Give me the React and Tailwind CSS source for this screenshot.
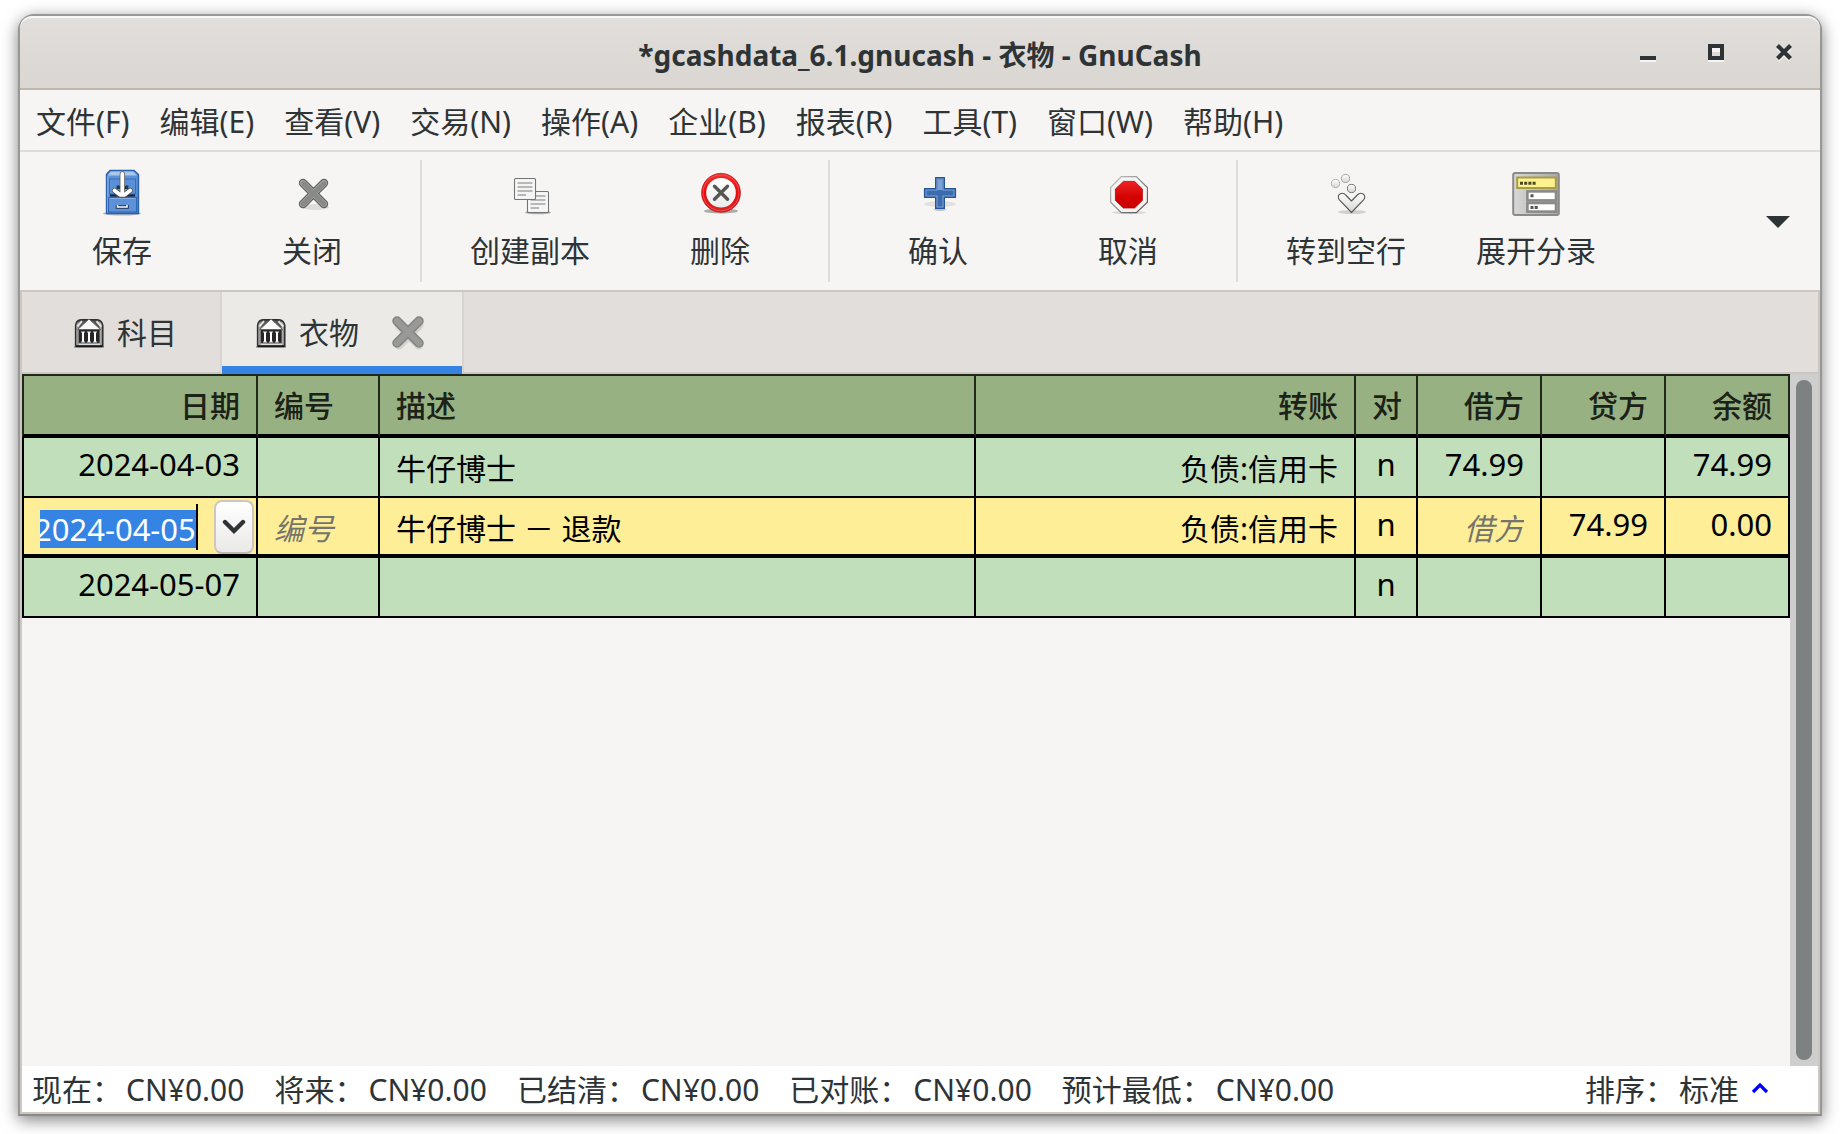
import { useEffect, useRef } from "react";

const SANS = "font-['Noto_Sans','Noto_Sans_CJK_SC',sans-serif]";

const menus = ["文件(F)", "编辑(E)", "查看(V)", "交易(N)", "操作(A)", "企业(B)", "报表(R)", "工具(T)", "窗口(W)", "帮助(H)"];

function SaveIcon() {
  return (
    <svg viewBox="0 0 48 48" className="size-12">
      <defs>
        <linearGradient id="cab" x1="0" y1="0" x2="0" y2="1">
          <stop offset="0" stopColor="#5f93d8" />
          <stop offset="1" stopColor="#4f86d0" />
        </linearGradient>
      </defs>
      <ellipse cx="24" cy="45.5" rx="19" ry="2" fill="#000" opacity="0.25" />
      <path d="M8.5 6.5 L12 2.5 H36 L40.5 6.5 V45.5 H8.5Z" fill="url(#cab)" stroke="#2a62ad" strokeWidth="1.4" />
      <path d="M9.8 7.5 L12.7 3.6 H35.4 L39 7.5Z" fill="#a9c6ec" />
      <path d="M9.8 8V44.5" stroke="#8fb4e4" strokeWidth="1" />
      <rect x="11.5" y="11" width="26" height="15" fill="#5a90d8" stroke="#3a6fb8" strokeWidth="1" />
      <path d="M12 27.5H37" stroke="#14233a" strokeWidth="2.2" />
      <rect x="10.5" y="29.5" width="28" height="14.5" fill="#5d92da" stroke="#2f67b1" strokeWidth="1" />
      <path d="M11.5 30.5H37.5" stroke="#86afe6" strokeWidth="1" />
      <path d="M20 17.5V19.5H29V17.5" fill="none" stroke="#1d3658" strokeWidth="2.8" />
      <path d="M19.5 37V39H29V37" fill="none" stroke="#23344c" strokeWidth="3.6" />
      <path d="M19.5 37V39H29V37" fill="none" stroke="#fff" strokeWidth="1.6" />
      <path d="M24.3 6V24M16.5 22.5L22 27H26.6L32.2 22.5" fill="none" stroke="#55544e" strokeWidth="5.2" strokeLinecap="round" strokeLinejoin="round" />
      <path d="M24.3 6V26M16.5 22.5L22 26.8H26.6L32.2 22.5" fill="none" stroke="#fff" strokeWidth="3.8" strokeLinecap="round" strokeLinejoin="round" />
    </svg>
  );
}

function CloseIcon() {
  return (
    <svg viewBox="0 0 48 48" className="size-12">
      <ellipse cx="27" cy="39" rx="14" ry="3" fill="#000" opacity="0.1" />
      <path d="M15 15L36 36M36 15L15 36" stroke="#5b5d59" strokeWidth="8.4" strokeLinecap="round" />
      <path d="M15 15L36 36M36 15L15 36" stroke="#a3a4a2" strokeWidth="6.2" strokeLinecap="round" />
      <path d="M15.4 15.4L36 36M36 15.4L15 36" stroke="#888a86" strokeWidth="4.6" strokeLinecap="round" />
    </svg>
  );
}

function Sheet({ x, y }) {
  return (
    <g transform={`translate(${x} ${y})`}>
      <rect x="0.6" y="0.6" width="20.8" height="20.8" rx="1" fill="#f4f4f4" stroke="#747673" strokeWidth="1.3" />
      <rect x="1.8" y="1.8" width="18.4" height="18.4" fill="none" stroke="#fff" strokeWidth="1" />
      <path d="M3.5 5H18.5M3.5 9H18.5M3.5 13H18.5M3.5 17H12" stroke="#b8b8b8" strokeWidth="2" />
    </g>
  );
}

function DuplicateIcon() {
  return (
    <svg viewBox="0 0 48 48" className="size-12">
      <ellipse cx="32" cy="44.5" rx="13" ry="1.8" fill="#000" opacity="0.3" />
      <Sheet x={21} y={23} />
      <Sheet x={8} y={10} />
    </svg>
  );
}

function DeleteIcon() {
  return (
    <svg viewBox="0 0 48 48" className="size-12">
      <defs>
        <linearGradient id="del" x1="0" y1="0" x2="0" y2="1">
          <stop offset="0" stopColor="#ef3030" />
          <stop offset="0.5" stopColor="#e50d0d" />
          <stop offset="1" stopColor="#d92626" />
        </linearGradient>
        <linearGradient id="delIn" x1="0" y1="0" x2="0" y2="1">
          <stop offset="0" stopColor="#fff" />
          <stop offset="1" stopColor="#ececec" />
        </linearGradient>
      </defs>
      <ellipse cx="25" cy="43" rx="17" ry="2.6" fill="#000" opacity="0.3" />
      <circle cx="25" cy="24.8" r="19.4" fill="url(#del)" stroke="#c80808" strokeWidth="0.8" />
      <circle cx="25" cy="24.8" r="18" fill="none" stroke="#f26464" strokeWidth="1" opacity="0.7" />
      <circle cx="25" cy="24.8" r="14.8" fill="url(#delIn)" />
      <path d="M18.5 18.3L31.5 31.3M31.5 18.3L18.5 31.3" stroke="#555753" strokeWidth="3.4" strokeLinecap="round" />
    </svg>
  );
}

function AddIcon() {
  return (
    <svg viewBox="0 0 48 48" className="size-12">
      <ellipse cx="26" cy="36" rx="16" ry="3" fill="#000" opacity="0.08" />
      <ellipse cx="26" cy="41.5" rx="6" ry="1.6" fill="#000" opacity="0.2" />
      <path d="M21.7 9.6H30.3V20.7H41.4V29.3H30.3V40.4H21.7V29.3H10.6V20.7H21.7Z" fill="#3a6cae" stroke="#23539b" strokeWidth="1.4" strokeLinejoin="round" />
      <path d="M23 11H29V22H40V28H29V39H23V28H12V22H23Z" fill="none" stroke="#7da0d0" strokeWidth="1.1" />
      <path d="M23.6 11.6H28.4V22H23.6Z" fill="#7ba2d6" />
    </svg>
  );
}

function StopIcon() {
  return (
    <svg viewBox="0 0 48 48" className="size-12">
      <defs>
        <linearGradient id="stopIn" x1="0" y1="0" x2="0" y2="1">
          <stop offset="0" stopColor="#ec2323" />
          <stop offset="0.6" stopColor="#d40202" />
          <stop offset="1" stopColor="#cc0000" />
        </linearGradient>
        <linearGradient id="stopEdge" x1="0" y1="0" x2="1" y2="1">
          <stop offset="0" stopColor="#c6c6c4" />
          <stop offset="1" stopColor="#4c4e4a" />
        </linearGradient>
      </defs>
      <ellipse cx="25" cy="44.6" rx="17" ry="1.6" fill="#000" opacity="0.12" />
      <path d="M17.3 8.6H32.3L43.4 19.5V34.3L32.3 44.6H17.3L6.6 34.3V19.5Z" fill="#f4f4f3" stroke="url(#stopEdge)" strokeWidth="1.2" />
      <path d="M19.4 13.4H30.6L38.4 21V32.4L30.6 40H19.4L11.4 32.4V21Z" fill="url(#stopIn)" stroke="#b50000" strokeWidth="0.8" />
    </svg>
  );
}

function JumpIcon() {
  return (
    <svg viewBox="0 0 48 48" className="size-12">
      <defs>
        <linearGradient id="ball" x1="0" y1="0" x2="0" y2="1">
          <stop offset="0" stopColor="#fff" />
          <stop offset="1" stopColor="#d3d3d1" />
        </linearGradient>
      </defs>
      <ellipse cx="30" cy="44" rx="14" ry="2" fill="#000" opacity="0.15" />
      <circle cx="13.5" cy="15.5" r="4.1" fill="url(#ball)" stroke="#b4b4b2" />
      <circle cx="23.5" cy="10.5" r="4.1" fill="url(#ball)" stroke="#a4a4a2" />
      <circle cx="29.5" cy="20.5" r="4.1" fill="url(#ball)" stroke="#70726e" />
      <path d="M29.5 44.5L17.2 31.6C15.6 29.4 16.2 26.6 18.4 25.7C20.4 24.9 22.4 25.5 23.7 27L29.5 33L35.3 27C36.8 25.4 38.8 24.9 40.8 25.7C43 26.8 43.4 29.6 41.8 31.6Z" fill="url(#ball)" stroke="#555753" strokeWidth="1.1" strokeLinejoin="round" />
    </svg>
  );
}

function SplitIcon() {
  return (
    <svg viewBox="0 0 48 48" className="size-12">
      <defs>
        <linearGradient id="panel" x1="0" y1="0" x2="1" y2="0">
          <stop offset="0" stopColor="#d8d8d8" />
          <stop offset="1" stopColor="#a8a8a8" />
        </linearGradient>
      </defs>
      <path d="M3 46H46L36 49H14Z" fill="#8b8b86" />
      <rect x="1.2" y="5" width="45.6" height="42" rx="2" fill="url(#panel)" stroke="#8a8a88" strokeWidth="2" />
      <rect x="5.2" y="9.5" width="38.6" height="10.5" fill="#fcf28e" stroke="#a79c4a" strokeWidth="2" />
      <path d="M8 15.3H24" stroke="#4b4720" strokeWidth="3" strokeDasharray="3 1.2" />
      <rect x="15.4" y="23.4" width="28.6" height="9" fill="#fff" stroke="#8a8a88" strokeWidth="2.6" />
      <rect x="15.4" y="35" width="28.6" height="8.6" fill="#fff" stroke="#8a8a88" strokeWidth="2.6" />
      <path d="M18.5 27.8H21.5M18.5 39.4H26.5" stroke="#555" strokeWidth="3" strokeDasharray="3 1.2" />
    </svg>
  );
}

function BankIcon() {
  return (
    <svg viewBox="0 0 32 32" className="size-8 shrink-0">
      <defs>
        <linearGradient id="bankWall" x1="0" y1="0" x2="1" y2="0">
          <stop offset="0" stopColor="#d0d0d0" />
          <stop offset="0.16" stopColor="#555" />
          <stop offset="0.84" stopColor="#555" />
          <stop offset="0.93" stopColor="#b8b8b8" />
          <stop offset="1" stopColor="#444" />
        </linearGradient>
      </defs>
      <path d="M1 30H31" stroke="#000" strokeWidth="2" opacity="0.25" />
      <path d="M2.6 29V8.5Q3.2 3.2 8 2.8H24Q28.8 3.2 29.8 8.5V29Z" fill="url(#bankWall)" stroke="#303030" strokeWidth="1.5" />
      <path d="M9 4.2L4.4 9.5M23.5 4.2L28.4 9.5" stroke="#e4e4e4" strokeWidth="2" />
      <path d="M4.6 12.6L16 2L27.6 12.6Z" fill="#fafafa" stroke="#555" strokeWidth="0.9" />
      <rect x="6" y="13" width="20.4" height="12.6" fill="#262626" />
      <path d="M10 15V25M16 15V25M22 15V25" stroke="#fff" strokeWidth="2" />
      <path d="M8 15H12M14 15H18M20 15H24M8 25H12M14 25H18M20 25H24" stroke="#e8e8e8" strokeWidth="1.2" />
      <path d="M5.5 27.4H27" stroke="#dcdcdc" strokeWidth="1.8" />
      <path d="M3 29.3H29.4" stroke="#161616" strokeWidth="1.8" />
    </svg>
  );
}

const tools = [
  [["保存", SaveIcon], ["关闭", CloseIcon]],
  [["创建副本", DuplicateIcon], ["删除", DeleteIcon]],
  [["确认", AddIcon], ["取消", StopIcon]],
  [["转到空行", JumpIcon], ["展开分录", SplitIcon]],
];

const totals = [
  ["现在：", "CN¥0.00"],
  ["将来：", "CN¥0.00"],
  ["已结清：", "CN¥0.00"],
  ["已对账：", "CN¥0.00"],
  ["预计最低：", "CN¥0.00"],
];

const columns = [
  ["日期", "text-right border-l-2"],
  ["编号", "text-left"],
  ["描述", "text-left"],
  ["转账", "text-right"],
  ["对", "text-center px-0"],
  ["借方", "text-right"],
  ["贷方", "text-right"],
  ["余额", "text-right"],
];

function TitleBar() {
  return (
    <header className="grid h-[74px] shrink-0 grid-cols-[1fr_auto_1fr] items-center rounded-t-xl border-t-2 border-b-2 border-t-[#f9f8f8] border-b-[#bfb8b1] bg-linear-to-b from-[#e1dedb] to-[#dad6d2] pt-1">
      <span />
      <h1 className="text-[28px] font-bold">*gcashdata_6.1.gnucash - 衣物 - GnuCash</h1>
      <div className="flex justify-end pr-0.5 pb-1">
        <button aria-label="最小化" className="flex h-12 w-17 items-center justify-center">
          <svg viewBox="0 0 16 18" className="h-[18px] w-4">
            <path d="M0 15H16V18H0Z" fill="#fff" opacity="0.7" />
            <path d="M0 12H16V16H0Z" fill="#2e3436" />
          </svg>
        </button>
        <button aria-label="最大化" className="flex h-12 w-17 items-center justify-center">
          <svg viewBox="0 0 16 18" className="h-[18px] w-4">
            <path d="M2 4H14V8H2ZM0 15H16V18H0Z" fill="#fff" opacity="0.7" />
            <path d="M2 2H14V14H2Z" fill="none" stroke="#2e3436" strokeWidth="4" />
          </svg>
        </button>
        <button aria-label="关闭窗口" className="flex h-12 w-17 items-center justify-center">
          <svg viewBox="0 0 16 18" className="h-[18px] w-4">
            <path d="M2 4L14 16M14 4L2 16" stroke="#fff" strokeWidth="4" opacity="0.7" />
            <path d="M1.5 1.5L14.5 14.5M14.5 1.5L1.5 14.5" stroke="#2e3436" strokeWidth="4.2" />
          </svg>
        </button>
      </div>
    </header>
  );
}

function DateInput() {
  const ref = useRef(null);
  useEffect(() => {
    ref.current.scrollLeft = ref.current.scrollWidth;
  }, []);
  return (
    <input
      ref={ref}
      aria-label="日期"
      defaultValue="2024-04-05"
      className="mt-1 h-[38px] min-w-0 flex-1 bg-[#3584e4] text-[31px] text-white outline-none"
    />
  );
}

function Register() {
  const head = "h-16 border-r-2 border-t-2 border-b-4 border-t-[#20281a] border-r-[#20281a] border-l-[#20281a] border-b-black bg-[#97b183] px-4 pt-0.5 pb-0 font-medium text-[#1d2218] leading-[44px]";
  const cell = "h-15 border-r-2 border-black px-4 align-top whitespace-nowrap ";
  const latin = "pt-1 text-[31px] leading-[44px] ";
  const han = "pt-[9px] leading-[44px] ";
  const green = "border-b-2 bg-[#c1dfbb] ";
  const yellow = "border-b-4 bg-[#ffee98] ";
  return (
    <table className="w-full table-fixed border-separate border-spacing-0 text-black">
      <colgroup>
        <col className="w-[236px]" />
        <col className="w-[122px]" />
        <col />
        <col className="w-[380px]" />
        <col className="w-[62px]" />
        <col className="w-[124px]" />
        <col className="w-[124px]" />
        <col className="w-[124px]" />
      </colgroup>
      <thead>
        <tr>
          {columns.map(([name, extra]) => (
            <th key={name} scope="col" className={`${head} ${extra}`}>{name}</th>
          ))}
        </tr>
      </thead>
      <tbody>
        <tr>
          <td className={`${cell}${latin}${green}border-l-2 text-right`}>2024-04-03</td>
          <td className={cell + green} />
          <td className={cell + han + green}>牛仔博士</td>
          <td className={`${cell}${han}${green}text-right`}>负债:信用卡</td>
          <td className={`${cell}${latin}${green}text-center`}>n</td>
          <td className={`${cell}${latin}${green}text-right`}>74.99</td>
          <td className={cell + green} />
          <td className={`${cell}${latin}${green}text-right`}>74.99</td>
        </tr>
        <tr>
          <td className="h-15 border-x-2 border-b-4 border-black bg-[#ffee98] py-0 pr-0.5 pl-4 align-top">
            <div className="flex h-14 items-center pt-0.5">
              <DateInput />
              <span className="h-[46px] w-0.5 bg-black" />
              <button aria-label="选择日期" className="ml-4 flex h-[54px] w-10 items-center justify-center rounded-lg border-2 border-[#cdc7c2] border-b-[#bfb8b1] bg-linear-to-b from-white to-[#ebe9e7]">
                <svg viewBox="0 0 24 16" className="h-4 w-6" fill="none" stroke="#2e3436" strokeWidth="4.4" strokeLinecap="round">
                  <path d="M3 3L12 12L21 3" />
                </svg>
              </button>
            </div>
          </td>
          <td className={cell + han + yellow}>
            <input aria-label="编号" placeholder="编号" className="block h-11 w-full bg-transparent italic outline-none placeholder:text-[#75756c]" />
          </td>
          <td className={cell + han + yellow}>牛仔博士 － 退款</td>
          <td className={`${cell}${han}${yellow}text-right`}>负债:信用卡</td>
          <td className={`${cell}${latin}${yellow}text-center`}>n</td>
          <td className={cell + han + yellow}>
            <input aria-label="借方" placeholder="借方" className="block h-11 w-full bg-transparent text-right italic outline-none placeholder:text-[#75756c]" />
          </td>
          <td className={`${cell}${latin}${yellow}text-right`}>74.99</td>
          <td className={`${cell}${latin}${yellow}text-right`}>0.00</td>
        </tr>
        <tr>
          <td className={`${cell}${latin}${green}border-l-2 text-right`}>2024-05-07</td>
          <td className={cell + green} />
          <td className={cell + green} />
          <td className={cell + green} />
          <td className={`${cell}${latin}${green}text-center`}>n</td>
          <td className={cell + green} />
          <td className={cell + green} />
          <td className={cell + green} />
        </tr>
      </tbody>
    </table>
  );
}

export default function App() {
  return (
    <div className={`${SANS} flex h-screen bg-white px-[18px] pt-3.5 pb-[18px] text-[30px] leading-[44px] text-[#2e3436]`}>
      <div className="flex min-w-0 flex-1 flex-col rounded-t-2xl border-2 border-[#979796] border-b-[#8a8a89] bg-[#f6f5f4] shadow-[0_4px_16px_rgba(0,0,0,0.5)]">
        <TitleBar />

        <nav className="flex h-[60px] shrink-0 items-center pt-1 pl-px">
          {menus.map((m) => (
            <button key={m} className="px-[15px] whitespace-nowrap">{m}</button>
          ))}
        </nav>

        <div className="flex h-[140px] shrink-0 items-stretch border-t-2 border-[#dddcda] pt-2 pr-[22px] pb-2 pl-[7px]">
          {tools.map((group, i) => (
            <div key={group[0][0]} className="flex">
              {i > 0 && <span className="mx-[13px] w-0.5 bg-[#dddcda]" />}
              {group.map(([label, Icon]) => (
                <button key={label} className="flex w-[190px] flex-col items-center gap-[13px] pt-2 whitespace-nowrap">
                  <Icon />
                  {label}
                </button>
              ))}
            </div>
          ))}
          <button aria-label="更多工具" className="ml-auto flex w-10 items-center justify-center pt-0.5">
            <svg viewBox="0 0 24 12" className="h-3 w-6">
              <path d="M0 0H24L12 12Z" fill="#2e3436" />
            </svg>
          </button>
        </div>

        <main className="flex min-h-0 flex-1 flex-col border-2 border-[#cdc7c2]">
          <div role="tablist" className="flex h-[82px] shrink-0 bg-[#e1dedb]">
            <button role="tab" aria-selected="false" className="flex w-50 items-center gap-3 border-r-2 border-b-2 border-r-[#d8d4d0] border-b-[#cdc7c2] pt-0.5 pl-[51px]">
              <BankIcon />
              科目
            </button>
            <div className="flex w-60 items-center border-b-8 border-[#3584e4] bg-[#ebeae7] pt-2 pl-[33px]">
              <button role="tab" aria-selected="true" className="flex items-center gap-3">
                <BankIcon />
                衣物
              </button>
              <button aria-label="关闭标签页" className="ml-8">
                <svg viewBox="0 0 36 36" className="size-9">
                  <path d="M8 10L28 30M28 10L8 30" stroke="#000" strokeWidth="9" strokeLinecap="round" opacity="0.1" />
                  <path d="M6 6L28 28M28 6L6 28" stroke="#80827e" strokeWidth="9.5" strokeLinecap="round" />
                  <path d="M6 6L28 28M28 6L6 28" stroke="#999a98" strokeWidth="6.6" strokeLinecap="round" />
                </svg>
              </button>
            </div>
            <span className="flex-1 border-b-2 border-l-2 border-b-[#cdc7c2] border-l-[#d8d4d0]" />
          </div>

          <div className="flex min-h-0 flex-1">
            <div className="min-w-0 flex-1">
              <Register />
            </div>
            <div className="flex w-7 shrink-0 bg-[#cecece] px-1.5 py-1.5">
              <div className="w-4 rounded-full bg-[#7e8181]" />
            </div>
          </div>

          <footer className="flex h-[46px] shrink-0 items-center bg-white pt-0.5 pr-[49px] pl-2.5 whitespace-nowrap">
            <div className="flex gap-[30px]">
              {totals.map(([label, value]) => (
                <div key={label} className="flex gap-1">
                  <span>{label}</span>
                  <span>{value}</span>
                </div>
              ))}
            </div>
            <button className="ml-auto flex items-center">
              <span>排序：</span>
              <span className="ml-1">标准</span>
              <svg viewBox="0 0 18 12" className="mb-1 ml-3 h-3 w-[18px]" fill="none" stroke="#0000ff" strokeWidth="3.2">
                <path d="M2 10L9 3L16 10" />
              </svg>
            </button>
          </footer>
        </main>
      </div>
    </div>
  );
}
